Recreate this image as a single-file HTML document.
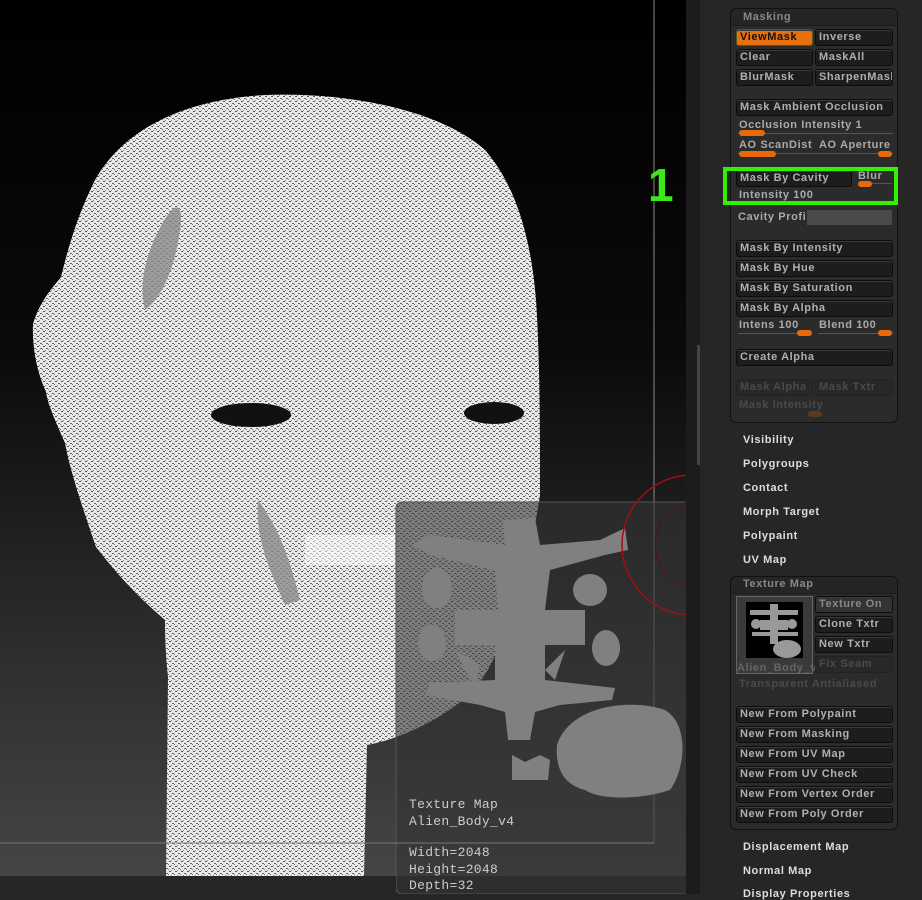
<!DOCTYPE html>
<html><head><meta charset="utf-8"><style>
*{margin:0;padding:0;box-sizing:border-box}
body{width:922px;height:894px;overflow:hidden;background:#262626;position:relative;font-family:"Liberation Sans",sans-serif}
.vp{position:absolute;left:0;top:0;width:686px;height:876px;background:linear-gradient(#000 0%,#0a0a0a 40%,#2e2e2e 75%,#454545 100%)}
.t{position:absolute;font-size:11px;font-weight:bold;letter-spacing:.6px;color:#aaa;white-space:nowrap;line-height:13px}
.b{position:absolute;height:17px;background:#1d1d1d;border:1px solid #0c0c0c;border-radius:3px;box-shadow:inset 0 1px 0 #3a3a3a;font-size:11px;font-weight:bold;letter-spacing:.6px;color:#b0b0b0;padding-left:3px;line-height:15px;white-space:nowrap;overflow:hidden}
.d{color:#4a4a4a;background:#282828;box-shadow:none;border-color:#222}
.box{position:absolute;background:#2b2b2b;border:1px solid #111;border-radius:6px}
.hd{position:absolute;left:0;right:0;top:0;height:17px;background:#252525;border-radius:6px 6px 0 0;border-bottom:1px solid #1a1a1a}
.sl{position:absolute;height:1px;background:#555}
.k{position:absolute;height:6px;background:#e8680c;border-radius:3px}
.s{position:absolute;left:743px;font-size:11px;font-weight:bold;letter-spacing:.6px;color:#ddd}
.ov{position:absolute;font-family:"Liberation Mono",monospace;font-size:13px;color:#ccc;letter-spacing:.3px}
</style></head><body>
<div class="vp"></div>
<svg style="position:absolute;left:0;top:0" width="700" height="894">
<defs><pattern id="sp" width="6" height="5" patternUnits="userSpaceOnUse"><rect width="6" height="5" fill="#e8e8e8"/><rect x="1" y="1" width="2" height="1" fill="#555"/><rect x="4" y="3" width="2" height="1" fill="#666"/><rect x="0" y="4" width="1" height="1" fill="#777"/><rect x="3" y="0" width="1" height="1" fill="#888"/></pattern></defs>
<path d="M265 95 C350 92 440 110 485 150 C520 190 532 250 536 300 C540 360 540 430 540 495 C530 560 515 620 497 651 C485 680 470 695 459 703 C430 725 395 740 367 745 L364 876 L166 876 L168 677 C165 650 165 630 165 620 C130 590 110 565 96 547 C80 500 70 470 65 443 C55 420 48 405 46 392 C36 370 32 345 33 324 C40 300 55 285 61 277 C70 240 80 210 95 180 C120 135 175 100 265 95 Z" fill="url(#sp)"/>
<path d="M150 250 C170 200 185 195 180 230 C175 270 160 300 145 310 C140 290 143 270 150 250Z" fill="#888" opacity=".8"/>
<path d="M258 500 C280 530 290 560 300 600 L285 605 C270 570 255 540 258 500Z" fill="#888" opacity=".8"/>
<path d="M305 535 L395 535 L395 565 L305 565 Z" fill="#fff" opacity=".5"/>
<ellipse cx="251" cy="415" rx="40" ry="12" fill="#111"/>
<ellipse cx="494" cy="413" rx="30" ry="11" fill="#111"/>
<line x1="654" y1="0" x2="654" y2="843" stroke="#888" stroke-width="1"/>
<rect x="396" y="502" width="304" height="392" rx="6" fill="#333" fill-opacity=".6" stroke="#555"/>
<line x1="0" y1="843" x2="654" y2="843" stroke="#777"/>
<g fill="#808080">
<path d="M412 545 L430 535 L505 545 L503 520 L535 518 L540 545 L600 540 L625 528 L628 550 L605 555 L550 570 L545 610 L585 610 L585 645 L545 645 L545 680 L615 688 L612 700 L560 705 L535 712 L530 740 L508 740 L505 712 L480 705 L425 695 L430 683 L495 680 L495 645 L455 645 L455 610 L498 610 L495 570 L430 555 Z"/>
<ellipse cx="437" cy="588" rx="15" ry="20"/><ellipse cx="590" cy="590" rx="17" ry="16"/>
<ellipse cx="432" cy="643" rx="14" ry="18"/><ellipse cx="606" cy="648" rx="14" ry="18"/>
<path d="M455 650 L480 665 L475 685 L465 670Z"/><path d="M565 650 L555 680 L545 670Z"/>
<path d="M557 745 C570 705 630 698 665 710 C690 725 685 770 670 790 C640 800 600 800 585 790 C565 785 555 770 557 745Z"/>
<path d="M512 755 L525 762 L540 755 L550 760 L548 780 L512 780 Z"/>
</g>
<circle cx="692" cy="545" r="70" fill="none" stroke="#a01010" stroke-width="1.5"/>
<circle cx="700" cy="545" r="45" fill="none" stroke="#5a1010" stroke-width="1"/>
<rect x="0" y="876" width="396" height="18" fill="#262626"/>
<rect x="686" y="0" width="14" height="894" fill="#1c1c1c"/>
<rect x="697" y="345" width="3" height="120" fill="#444"/>
</svg>
<div class="ov" style="left:409px;top:797px">Texture Map</div>
<div class="ov" style="left:409px;top:814px">Alien_Body_v4</div>
<div class="ov" style="left:409px;top:845px">Width=2048</div>
<div class="ov" style="left:409px;top:862px">Height=2048</div>
<div class="ov" style="left:409px;top:878px">Depth=32</div>
<div style="position:absolute;left:648px;top:160px;font-size:46px;font-weight:bold;color:#3de81a;line-height:50px">1</div>

<div class="box" style="left:730px;top:8px;width:168px;height:415px"><div class="hd"></div></div>
<div class="t" style="left:743px;top:11px;color:#888">Masking</div>
<div class="b" style="left:736px;top:29px;width:77px;background:#e8700c;color:#111;border-color:#552">ViewMask</div>
<div class="b" style="left:815px;top:29px;width:78px">Inverse</div>
<div class="b" style="left:736px;top:49px;width:77px">Clear</div>
<div class="b" style="left:815px;top:49px;width:78px">MaskAll</div>
<div class="b" style="left:736px;top:69px;width:77px">BlurMask</div>
<div class="b" style="left:815px;top:69px;width:78px">SharpenMask</div>
<div class="b" style="left:736px;top:99px;width:157px">Mask Ambient Occlusion</div>
<div class="t" style="left:739px;top:119px">Occlusion Intensity 1</div>
<div class="sl" style="left:738px;top:133px;width:155px"></div><div class="k" style="left:739px;top:130px;width:26px"></div>
<div class="t" style="left:739px;top:139px">AO ScanDist</div><div class="t" style="left:819px;top:139px">AO Aperture</div>
<div class="sl" style="left:738px;top:153px;width:155px"></div><div class="k" style="left:739px;top:151px;width:37px"></div><div class="k" style="left:878px;top:151px;width:14px"></div>
<div class="b" style="left:736px;top:170px;width:116px">Mask By Cavity</div>
<div class="t" style="left:858px;top:170px">Blur</div>
<div class="sl" style="left:858px;top:183px;width:34px"></div><div class="k" style="left:858px;top:181px;width:14px"></div>
<div class="t" style="left:739px;top:189px">Intensity 100</div>
<div style="position:absolute;left:723px;top:167px;width:175px;height:38px;border:4px solid #33f000"></div>
<div class="t" style="left:738px;top:211px">Cavity Profile</div>
<div style="position:absolute;left:807px;top:210px;width:85px;height:15px;background:#4a4a4a"></div>
<div class="b" style="left:736px;top:240px;width:157px">Mask By Intensity</div>
<div class="b" style="left:736px;top:260px;width:157px">Mask By Hue</div>
<div class="b" style="left:736px;top:280px;width:157px">Mask By Saturation</div>
<div class="b" style="left:736px;top:300px;width:157px">Mask By Alpha</div>
<div class="t" style="left:739px;top:319px">Intens 100</div><div class="t" style="left:819px;top:319px">Blend 100</div>
<div class="sl" style="left:738px;top:333px;width:74px"></div><div class="sl" style="left:818px;top:333px;width:75px"></div>
<div class="k" style="left:797px;top:330px;width:15px"></div><div class="k" style="left:878px;top:330px;width:14px"></div>
<div class="b" style="left:736px;top:349px;width:157px">Create Alpha</div>
<div class="b d" style="left:736px;top:379px;width:77px">Mask Alpha</div>
<div class="b d" style="left:815px;top:379px;width:78px">Mask Txtr</div>
<div class="t" style="left:739px;top:399px;color:#4a4a4a">Mask Intensity</div>
<div class="k" style="left:808px;top:411px;width:14px;background:#5a3a1a"></div>

<div class="s" style="top:434px">Visibility</div>
<div class="s" style="top:458px">Polygroups</div>
<div class="s" style="top:482px">Contact</div>
<div class="s" style="top:506px">Morph Target</div>
<div class="s" style="top:530px">Polypaint</div>
<div class="s" style="top:554px">UV Map</div>

<div class="box" style="left:730px;top:576px;width:168px;height:254px"><div class="hd"></div></div>
<div class="t" style="left:743px;top:578px;color:#888">Texture Map</div>
<div style="position:absolute;left:736px;top:596px;width:77px;height:78px;border:1px solid #666;background:#3a3a3a"></div>
<svg style="position:absolute;left:746px;top:602px" width="57" height="56"><rect width="57" height="56" fill="#000"/><g fill="#999"><rect x="24" y="2" width="8" height="40"/><rect x="4" y="8" width="48" height="5"/><rect x="14" y="18" width="28" height="10"/><rect x="6" y="30" width="46" height="4"/><ellipse cx="41" cy="47" rx="14" ry="9"/><circle cx="10" cy="22" r="5"/><circle cx="46" cy="22" r="5"/></g></svg>
<div class="t" style="left:737px;top:662px;color:#666">Alien_Body_v</div>
<div class="b" style="left:815px;top:596px;width:78px;background:#333;color:#888">Texture On</div>
<div class="b" style="left:815px;top:616px;width:78px">Clone Txtr</div>
<div class="b" style="left:815px;top:636px;width:78px">New Txtr</div>
<div class="b d" style="left:815px;top:656px;width:78px">Fix Seam</div>
<div class="t" style="left:739px;top:678px;color:#4a4a4a">Transparent Antialiased</div>
<div class="b" style="left:736px;top:706px;width:157px">New From Polypaint</div>
<div class="b" style="left:736px;top:726px;width:157px">New From Masking</div>
<div class="b" style="left:736px;top:746px;width:157px">New From UV Map</div>
<div class="b" style="left:736px;top:766px;width:157px">New From UV Check</div>
<div class="b" style="left:736px;top:786px;width:157px">New From Vertex Order</div>
<div class="b" style="left:736px;top:806px;width:157px">New From Poly Order</div>
<div class="s" style="top:841px">Displacement Map</div>
<div class="s" style="top:865px">Normal Map</div>
<div class="s" style="top:888px">Display Properties</div>
</body></html>
